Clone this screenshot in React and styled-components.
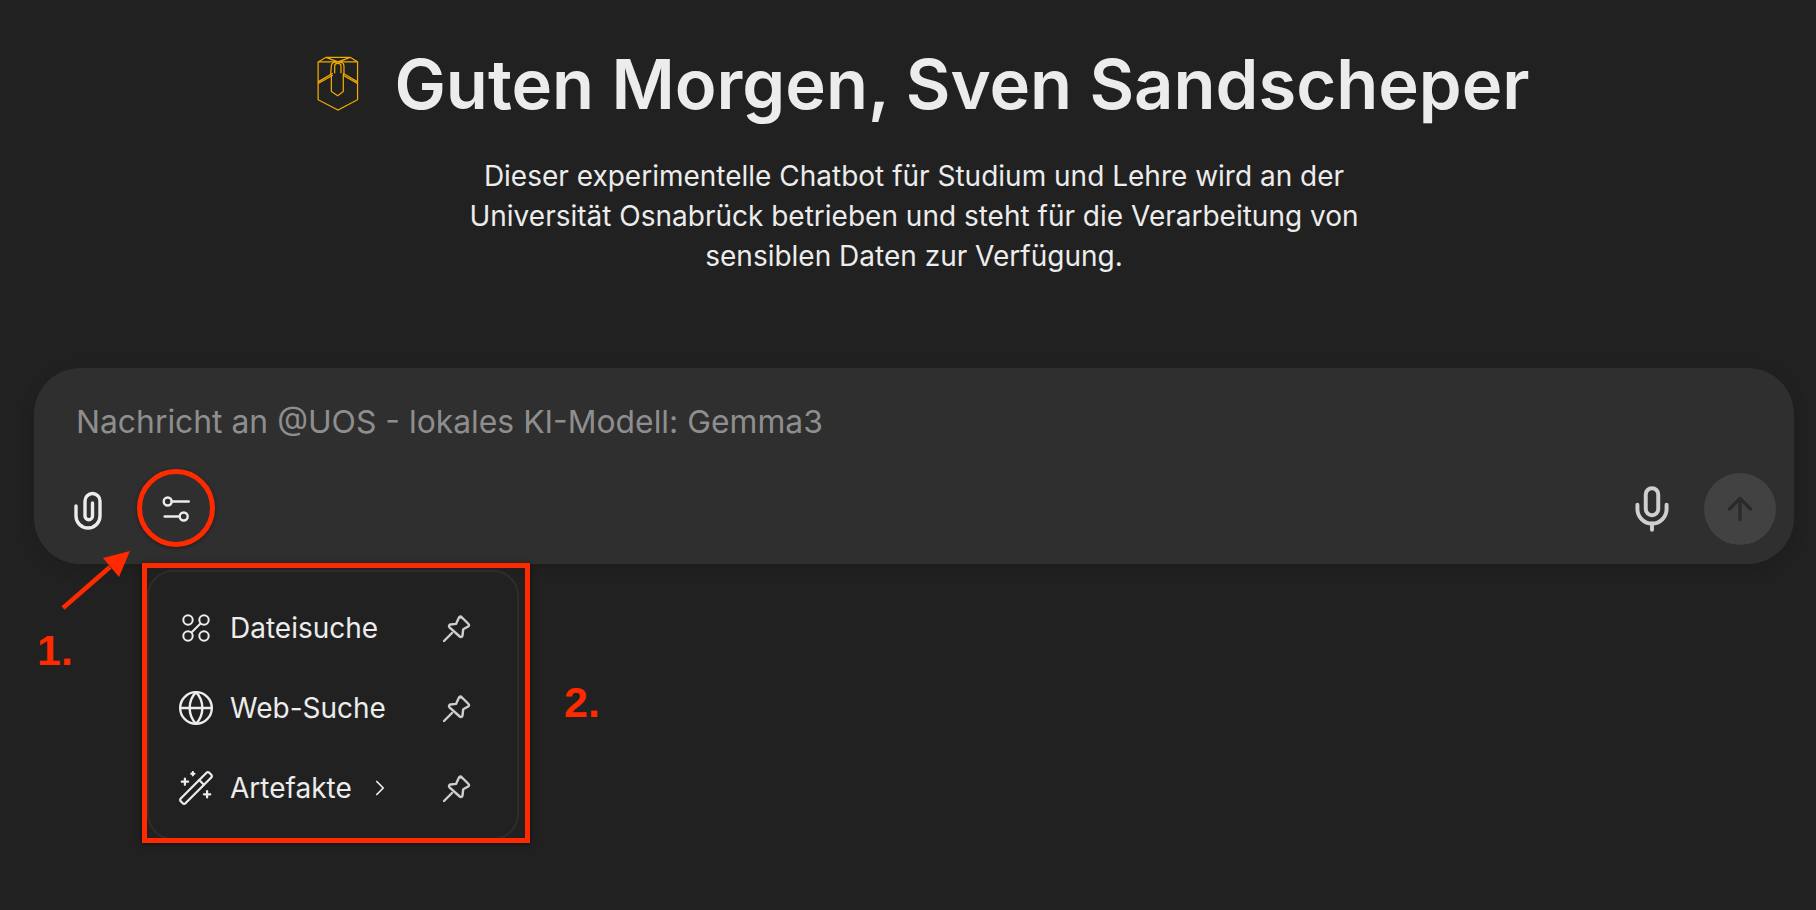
import React from "react";
import styled, { createGlobalStyle } from "styled-components";
import { ArrowUp, ChevronRight, Globe, Mic, WandSparkles } from "lucide-react";

const GlobalStyle = createGlobalStyle`
  html, body { margin: 0; height: 100%; background: #212121; }
  body { font-family: Inter, "Liberation Sans", sans-serif; color: #ececec; overflow: hidden; }
`;

const menuItems = [
  { label: "Dateisuche", icon: <ToolsIcon /> },
  { label: "Web-Suche", icon: <Globe size={38} strokeWidth={1.5} /> },
  { label: "Artefakte", icon: <WandSparkles size={38} strokeWidth={1.4} />, more: true },
];

function ToolsIcon() {
  return (
    <svg width="30" height="30" viewBox="0 0 30 30" fill="none" stroke="currentColor" strokeWidth="2">
      <circle cx="7" cy="7" r="4.700" />
      <circle cx="23" cy="7" r="4.700" />
      <circle cx="7" cy="23" r="4.700" />
      <circle cx="23" cy="23" r="4.700" />
      <path d="M19.500 10.500 10.500 19.500" />
    </svg>
  );
}

function PinIcon() {
  return (
    <svg width="30" height="30" viewBox="0 0 30 30" fill="none" stroke="currentColor" strokeWidth="2.400" strokeLinecap="round" strokeLinejoin="round">
      <path d="M2 28 10 20" />
      <path d="M19 3.500 26.500 11c.8.8.6 2-.3 2.500l-5 2.800-.7 6.200c-.2 1.500-1.800 2-2.800 1L7.500 14.300c-1-1-.5-2.600 1-2.800l5.500-.6 3-6.300c.4-.9 1.300-1.200 2-.1Z" />
    </svg>
  );
}

function ClipIcon() {
  return (
    <svg width="30" height="42" viewBox="0 0 30 42" fill="none" stroke="currentColor" strokeWidth="3.400" strokeLinecap="round">
      <path d="M3 18v10a12 12 0 0 0 24 0V13a7.500 7.500 0 0 0-15 0v15a3.750 3.750 0 0 0 7.500 0V15" />
    </svg>
  );
}

function SlidersIcon() {
  return (
    <svg width="30" height="30" viewBox="0 0 30 30" fill="none" stroke="currentColor" strokeWidth="2.400" strokeLinecap="round">
      <circle cx="6.700" cy="7.500" r="4" />
      <path d="M10.700 7.500h17" />
      <circle cx="22.700" cy="22.500" r="4" />
      <path d="M3.700 22.500h15" />
    </svg>
  );
}

function Logo() {
  return (
    <LogoSvg viewBox="75 72 132 172" fill="none" stroke="#eeaa00" strokeWidth="3.800">
      <path d="M81 93 105 79h73l22 14v114l-59 31-60-31Z" />
      <path d="M81 93h119M105 79l36 14 37-14" />
      <path d="M81 153 125 127M81 158 125 133M200 153 156 127M200 158 156 133" />
      <path d="M122 105c0-16 38-16 38 0v22l-2 6v49l-17 13-19-13v-49l-2-6Z" transform="translate(-1)" />
      <path d="M131 127v-22c0-10 19-10 19 0v22" />
    </LogoSvg>
  );
}

export default function App() {
  return (
    <Page>
      <GlobalStyle />
      <Greeting>
        <Logo />
        <Title>Guten Morgen, Sven Sandscheper</Title>
      </Greeting>
      <Intro>
        Dieser experimentelle Chatbot für Studium und Lehre wird an der
        <br />
        Universität Osnabrück betrieben und steht für die Verarbeitung von
        <br />
        sensiblen Daten zur Verfügung.
      </Intro>

      <Composer>
        <Placeholder>Nachricht an @UOS - lokales KI-Modell: Gemma3</Placeholder>
        <ComposerBar>
          <ToolGroup $gap={38}>
            <IconButton $light><ClipIcon /></IconButton>
            <IconButton $light><SlidersIcon /></IconButton>
          </ToolGroup>
          <ToolGroup $gap={27}>
            <IconButton><Mic size={50} strokeWidth={1.9} /></IconButton>
            <SendButton><ArrowUp size={36} strokeWidth={2.2} /></SendButton>
          </ToolGroup>
        </ComposerBar>

        <ToolMenu>
          {menuItems.map((item) => (
            <MenuRow key={item.label}>
              <MenuIcon>{item.icon}</MenuIcon>
              <MenuLabel>{item.label}</MenuLabel>
              {item.more && <Chevron><ChevronRight size={26} strokeWidth={1.6} /></Chevron>}
              <PinSlot><PinIcon /></PinSlot>
            </MenuRow>
          ))}
        </ToolMenu>
      </Composer>

      <CircleMark />
      <Arrow viewBox="0 0 70 61" fill="none">
        <path d="M3 58 50 17" stroke="#ff2a00" strokeWidth="4.500" />
        <path d="M70 1 43 8 59 27Z" fill="#ff2a00" />
      </Arrow>
      <BoxMark />
      <Note $x={37} $y={626}>1.</Note>
      <Note $x={564} $y={678}>2.</Note>
    </Page>
  );
}

const Page = styled.div`
  position: relative;
  box-sizing: border-box;
  height: 910px;
  padding: 46px 22px 0 34px;
  display: flex;
  flex-direction: column;
  align-items: center;
`;

const Greeting = styled.div`
  display: flex;
  align-items: center;
  justify-content: center;
  gap: 34px;
  height: 76px;
  padding-left: 18px;
`;

const LogoSvg = styled.svg`
  width: 44px;
  height: 57px;
  margin-top: -2px;
`;

const Title = styled.h1`
  margin: 0;
  font-size: 68.700px;
  line-height: 76px;
  font-weight: 600;
  color: #ececec;
  white-space: nowrap;
`;

const Intro = styled.p`
  margin: 34px 0 0;
  font-size: 28px;
  line-height: 40px;
  text-align: center;
  color: #ececec;
`;

const Composer = styled.div`
  position: relative;
  box-sizing: border-box;
  width: 100%;
  height: 196px;
  margin-top: 92px;
  padding: 32px 18px 18px 42px;
  border-radius: 46px;
  background: #2f2f2f;
  box-shadow: 0 4px 16px rgba(0, 0, 0, 0.12);
`;

const Placeholder = styled.div`
  font-size: 31.850px;
  line-height: 44px;
  color: #8e8e8e;
`;

const ComposerBar = styled.div`
  margin: 29px 0 0 -13px;
  display: flex;
  align-items: center;
  justify-content: space-between;
`;

const ToolGroup = styled.div`
  display: flex;
  align-items: center;
  gap: ${(p) => p.$gap}px;
`;

const IconButton = styled.div`
  width: 50px;
  height: 72px;
  display: flex;
  align-items: center;
  justify-content: center;
  color: ${(p) => (p.$light ? "#ececec" : "#cfcfcf")};
`;

const SendButton = styled.div`
  width: 72px;
  height: 72px;
  border-radius: 50%;
  background: #424242;
  color: #2a2a2a;
  display: flex;
  align-items: center;
  justify-content: center;
`;

const ToolMenu = styled.div`
  position: absolute;
  left: 113px;
  top: 202px;
  box-sizing: border-box;
  width: 372px;
  height: 270px;
  padding: 16px 0 0;
  display: flex;
  flex-direction: column;
  background: #212121;
  border: 2px solid #2d2d2d;
  border-radius: 26px;
`;

const MenuRow = styled.div`
  height: 80px;
  display: flex;
  align-items: center;
  padding: 0 45px 0 28px;
`;

const MenuIcon = styled.span`
  width: 38px;
  display: flex;
  justify-content: center;
  color: #ececec;
`;

const MenuLabel = styled.span`
  margin-left: 15px;
  font-size: 28px;
  color: #ececec;
`;

const Chevron = styled.span`
  margin-left: 15px;
  display: flex;
  color: #ececec;
`;

const PinSlot = styled.span`
  margin-left: auto;
  display: flex;
  color: #cfcfcf;
`;

const CircleMark = styled.div`
  position: absolute;
  left: 137px;
  top: 469px;
  box-sizing: border-box;
  width: 78px;
  height: 78px;
  border: 5px solid #ff2a00;
  border-radius: 50%;
  box-shadow: 0 1px 4px rgba(0, 0, 0, 0.4);
`;

const Arrow = styled.svg`
  position: absolute;
  left: 60px;
  top: 550px;
  width: 70px;
  height: 61px;
`;

const BoxMark = styled.div`
  position: absolute;
  left: 142px;
  top: 563px;
  box-sizing: border-box;
  width: 388px;
  height: 280px;
  border: 5px solid #ff2a00;
  box-shadow: 0 1px 6px rgba(0, 0, 0, 0.5);
`;

const Note = styled.div`
  position: absolute;
  left: ${(p) => p.$x}px;
  top: ${(p) => p.$y}px;
  font-family: "Liberation Sans", Arial, sans-serif;
  font-size: 43px;
  line-height: 48px;
  font-weight: 700;
  color: #ff2a00;
`;
